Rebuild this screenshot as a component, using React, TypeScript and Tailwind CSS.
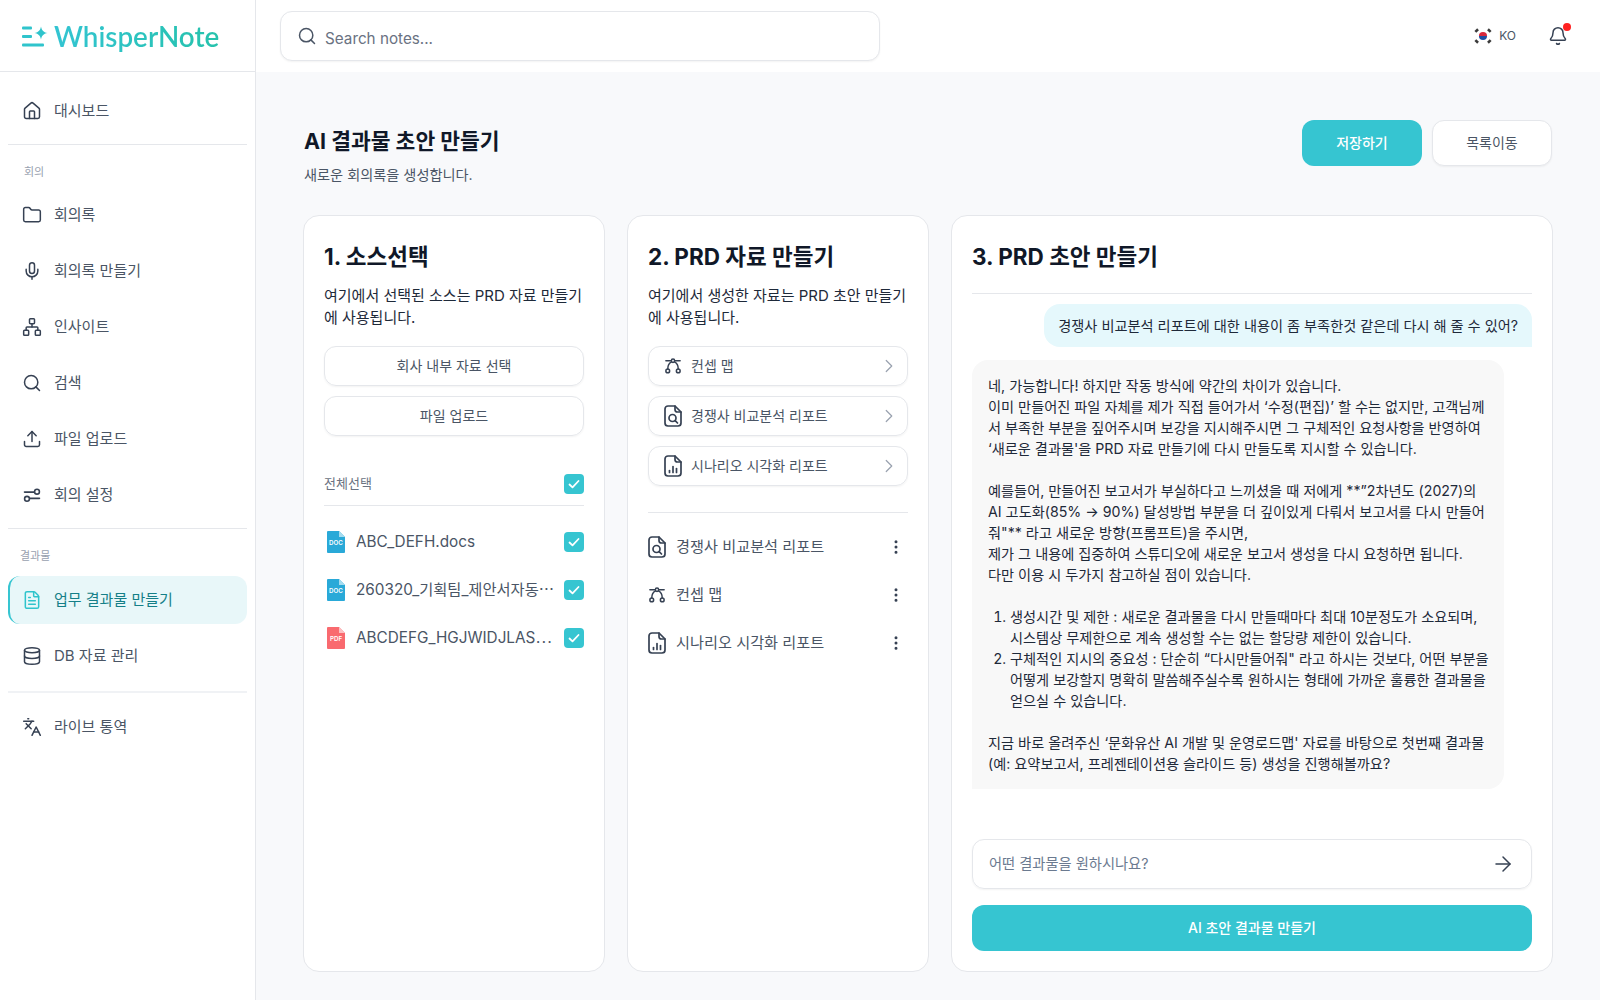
import { ArrowRight, Bell, ChevronRight, Database, EllipsisVertical, FileText, Folder, House, Languages, Mic, Network, Search, Upload } from 'lucide-react';

const FONT = 'font-[Inter,"Noto_Sans_CJK_KR",sans-serif]';

function MeetingSettingsIcon({ className }: { className?: string }) {
  return (
    <svg viewBox="0 0 24 24" fill="none" stroke="currentColor" strokeWidth="1.900" strokeLinecap="round" className={className}>
      <path d="M3 8.500h11.500" />
      <circle cx="18" cy="8" r="2.900" />
      <path d="M9.500 16H21" />
      <circle cx="6" cy="16.500" r="2.900" />
    </svg>
  );
}

function ConceptMapIcon() {
  return (
    <svg viewBox="0 0 24 24" fill="none" stroke="currentColor" strokeWidth="2" strokeLinecap="round" strokeLinejoin="round" className="h-[18px] w-[18px] shrink-0 text-[#364153]">
      <circle cx="12" cy="5" r="2.200" />
      <circle cx="5" cy="18.500" r="2.500" />
      <circle cx="19" cy="18.500" r="2.500" />
      <path d="M9.800 5H2.500" />
      <path d="M14.200 5h7.300" />
      <path d="M10 6.500c-3 1.500-5 4.500-5 9.500" />
      <path d="M14 6.500c3 1.500 5 4.500 5 9.500" />
    </svg>
  );
}

function DocSearchIcon() {
  return (
    <svg viewBox="3 1 18 22" fill="none" stroke="currentColor" strokeWidth="1.700" strokeLinecap="round" strokeLinejoin="round" className="h-[22px] w-[18px] shrink-0 text-[#364153]">
      <path d="M14 2H7a3 3 0 0 0-3 3v14a3 3 0 0 0 3 3h10a3 3 0 0 0 3-3V8z" />
      <path d="M14 2v3.500a2.500 2.500 0 0 0 2.500 2.500H20" />
      <circle cx="11.500" cy="14" r="3.500" />
      <path d="m14.200 16.700 2.300 2.300" />
    </svg>
  );
}

function DocChartIcon() {
  return (
    <svg viewBox="3 1 18 22" fill="none" stroke="currentColor" strokeWidth="1.700" strokeLinecap="round" strokeLinejoin="round" className="h-[22px] w-[18px] shrink-0 text-[#364153]">
      <path d="M14 2H7a3 3 0 0 0-3 3v14a3 3 0 0 0 3 3h10a3 3 0 0 0 3-3V8z" />
      <path d="M14 2v3.500a2.500 2.500 0 0 0 2.500 2.500H20" />
      <path d="M8.500 18.500v-2" />
      <path d="M12 18.500v-6" />
      <path d="M15.500 18.500v-4" />
    </svg>
  );
}

function FileBadge({ label, color, fold }: { label: string; color: string; fold: string }) {
  return (
    <svg viewBox="0 0 18 22" className="h-[22px] w-[18px] shrink-0">
      <path d="M1 0h11l6 6v15a1 1 0 0 1-1 1H1a1 1 0 0 1-1-1V1a1 1 0 0 1 1-1z" fill={color} />
      <path d="M12 0l6 6h-6z" fill={fold} />
      <text x="9" y="13.500" textAnchor="middle" fontSize="6.200" fontWeight="600" fill="#fff" fontFamily="Inter, sans-serif">{label}</text>
    </svg>
  );
}

function KoreaFlag() {
  return (
    <svg viewBox="0 0 20 20" className="h-[18px] w-[18px]">
      <circle cx="10" cy="10" r="10" fill="#fff" />
      <path d="M5.500 10a4.500 4.500 0 0 1 9 0z" fill="#d8283c" />
      <path d="M5.500 10a4.500 4.500 0 0 0 9 0z" fill="#1f4fa3" />
      <g stroke="#3a3a3a" strokeWidth="2.800" strokeLinecap="butt">
        <path d="M1.500 5.500l3-3" />
        <path d="M15.500 2.500l3 3" />
        <path d="M1.500 14.500l3 3" />
        <path d="M15.500 17.500l3-3" />
      </g>
    </svg>
  );
}

function Check() {
  return (
    <span className="flex h-5 w-5 shrink-0 items-center justify-center rounded-[4px] bg-[#36c5d1]">
      <svg viewBox="0 0 20 20" fill="none" stroke="#fff" strokeWidth="1.800" strokeLinecap="round" strokeLinejoin="round" className="h-5 w-5">
        <path d="M5.500 10.500l3 2.800 6-6.300" />
      </svg>
    </span>
  );
}

const meetingNav = [
  { label: '회의록', icon: Folder },
  { label: '회의록 만들기', icon: Mic },
  { label: '인사이트', icon: Network },
  { label: '검색', icon: Search },
  { label: '파일 업로드', icon: Upload },
  { label: '회의 설정', icon: MeetingSettingsIcon },
];

function NavItem({ label, icon: Icon }: { label: string; icon: React.ComponentType<{ className?: string; strokeWidth?: number }> }) {
  return (
    <div className="flex h-12 items-center gap-3 rounded-xl px-3.5 text-[15px] text-[#4a5565]">
      <Icon className="h-5 w-5 shrink-0 text-[#364153]" strokeWidth={1.8} />
      <span>{label}</span>
    </div>
  );
}

function Sidebar() {
  return (
    <aside className="flex h-full w-[256px] shrink-0 flex-col border-r border-[#e5e7eb] bg-white">
      <div className="flex h-[72px] shrink-0 items-center gap-1.5 border-b border-[#e5e7eb] pl-[22px]">
        <svg viewBox="0 0 26 22" className="h-[22px] w-[26px] shrink-0" fill="#2fc4cc">
          <rect x="0" y="1.500" width="10" height="3" rx="1" />
          <rect x="0" y="10" width="10" height="3" rx="1" />
          <rect x="0" y="18.500" width="22" height="3" rx="1" />
          <path d="M19 1.500c.7 3.700 2.300 5.700 6.500 6.500-4.200.8-5.800 2.800-6.500 6.500-.7-3.700-2.300-5.700-6.500-6.500 4.200-.8 5.800-2.800 6.500-6.500z" />
        </svg>
        <span className="mt-[3px] bg-linear-to-r from-[#33c4d2] to-[#26c2ac] bg-clip-text pt-[2px] pb-[2px] font-['Lato',sans-serif] text-[27.800px] leading-none font-semibold text-transparent">WhisperNote</span>
      </div>
      <nav className="flex flex-col px-2 pt-[15px]">
        <NavItem label="대시보드" icon={House} />
        <div className="mt-[9px] border-t border-[#e5e7eb]" />
        <p className="mt-[19px] pl-4 text-[11px] leading-4 text-[#99a1af]">회의</p>
        <div className="mt-[11px] flex flex-col gap-2">
          {meetingNav.map(item => <NavItem key={item.label} {...item} />)}
        </div>
        <div className="mt-[9px] border-t border-[#e5e7eb]" />
        <p className="mt-[19px] pl-3 text-[11px] leading-4 text-[#99a1af]">결과물</p>
        <div className="mt-[12px] flex h-12 items-center gap-3 rounded-xl border-l-2 border-[#36c5d1] bg-[#e8f7f9] px-3 text-[15px] text-[#157f88]">
          <FileText className="h-5 w-5 shrink-0 text-[#2fc4cc]" strokeWidth={1.8} />
          <span>업무 결과물 만들기</span>
        </div>
        <div className="mt-2">
          <NavItem label="DB 자료 관리" icon={Database} />
        </div>
        <div className="mt-[11px] border-t-2 border-[#f0f2f5]" />
        <div className="mt-2.5">
          <NavItem label="라이브 통역" icon={Languages} />
        </div>
      </nav>
    </aside>
  );
}

function TopBar() {
  return (
    <header className="flex h-[72px] shrink-0 items-center justify-between bg-white pr-8 pl-6">
      <div className="flex h-[50px] w-[600px] items-center gap-2 rounded-xl border border-[#e5e7eb] bg-white px-4 shadow-xs">
        <Search className="h-5 w-5 text-[#4a5565]" strokeWidth={1.8} />
        <span className="pt-1.5 text-[15.250px] text-[#6a7282]">Search notes...</span>
      </div>
      <div className="flex items-center gap-8">
        <div className="flex items-center gap-[7px]">
          <KoreaFlag />
          <span className="text-xs text-[#4a5565]">KO</span>
        </div>
        <div className="relative">
          <Bell className="h-5 w-5 text-[#364153]" strokeWidth={1.8} />
          <span className="absolute -top-[3px] -right-[3px] h-2 w-2 rounded-full bg-[#ff2020]" />
        </div>
      </div>
    </header>
  );
}

const sourceFiles = [
  { name: 'ABC_DEFH.docs', label: 'DOC', color: '#29a9d8', fold: '#a5dcf0' },
  { name: '260320_기획팀_제안서자동⋯', label: 'DOC', color: '#29a9d8', fold: '#a5dcf0' },
  { name: 'ABCDEFG_HGJWIDJLAS⋯', label: 'PDF', color: '#f96a6f', fold: '#fcc0c2' },
];

function SourcePanel() {
  return (
    <section className="flex min-w-0 flex-col rounded-2xl border border-[#e5e7eb] bg-white px-5 pt-[25px] pb-5">
      <h2 className="text-[22.500px] leading-8 font-bold text-[#101828]">1. 소스선택</h2>
      <p className="mt-3 text-[15px] leading-[22px] text-[#1e2939]">여기에서 선택된 소스는 PRD 자료 만들기에 사용됩니다.</p>
      <div className="mt-[17px] flex flex-col gap-2.5">
        <button className="h-10 rounded-xl border border-[#e5e7eb] text-sm text-[#4a5565] shadow-xs">회사 내부 자료 선택</button>
        <button className="h-10 rounded-xl border border-[#e5e7eb] text-sm text-[#4a5565] shadow-xs">파일 업로드</button>
      </div>
      <div className="mt-[38px] flex items-center justify-between border-b border-[#e5e7eb] pb-[11px]">
        <span className="text-[13px] text-[#6a7282]">전체선택</span>
        <Check />
      </div>
      <ul className="mt-3 flex flex-col">
        {sourceFiles.map(file => (
          <li key={file.name} className="flex h-12 items-center pl-[3px]">
            <FileBadge label={file.label} color={file.color} fold={file.fold} />
            <span className="ml-[11px] min-w-0 flex-1 text-[15.300px] whitespace-nowrap text-[#4a5565]">{file.name}</span>
            <span className="ml-3"><Check /></span>
          </li>
        ))}
      </ul>
    </section>
  );
}

const makeItems = [
  { label: '컨셉 맵', icon: ConceptMapIcon },
  { label: '경쟁사 비교분석 리포트', icon: DocSearchIcon },
  { label: '시나리오 시각화 리포트', icon: DocChartIcon },
];

const madeItems = [
  { label: '경쟁사 비교분석 리포트', icon: DocSearchIcon },
  { label: '컨셉 맵', icon: ConceptMapIcon },
  { label: '시나리오 시각화 리포트', icon: DocChartIcon },
];

function MaterialPanel() {
  return (
    <section className="flex min-w-0 flex-col rounded-2xl border border-[#e5e7eb] bg-white px-5 pt-[25px] pb-5">
      <h2 className="text-[22.500px] leading-8 font-bold text-[#101828]">2. PRD 자료 만들기</h2>
      <p className="mt-3 text-[15px] leading-[22px] text-[#1e2939]">여기에서 생성한 자료는 PRD 초안 만들기에 사용됩니다.</p>
      <div className="mt-[17px] flex flex-col gap-2.5">
        {makeItems.map(({ label, icon: Icon }) => (
          <div key={label} className="flex h-10 items-center rounded-xl border border-[#e5e7eb] pr-[7px] pl-[15px] text-sm text-[#4a5565] shadow-xs">
            <Icon />
            <span className="ml-[9px] flex-1">{label}</span>
            <ChevronRight className="h-[22px] w-[22px] text-[#99a1af]" strokeWidth={1.3} />
          </div>
        ))}
      </div>
      <div className="mt-[26px] border-t border-[#e5e7eb]" />
      <ul className="mt-[10px] flex flex-col">
        {madeItems.map(({ label, icon: Icon }) => (
          <li key={label} className="flex h-12 items-center pr-[3px] text-[15.200px] text-[#4a5565]">
            <Icon />
            <span className="ml-2.5 flex-1">{label}</span>
            <EllipsisVertical className="h-[18px] w-[18px] text-[#364153]" strokeWidth={2} />
          </li>
        ))}
      </ul>
    </section>
  );
}

function DraftPanel() {
  return (
    <section className="flex min-h-0 min-w-0 flex-col rounded-2xl border border-[#e5e7eb] bg-white px-5 pt-[25px] pb-5">
      <h2 className="border-b border-[#e5e7eb] pb-5 text-[22.500px] leading-8 font-bold text-[#101828]">3. PRD 초안 만들기</h2>
      <div className="mt-2.5 flex justify-end">
        <p className="rounded-t-2xl rounded-bl-2xl bg-[#e5f8fc] px-[14px] py-[11px] text-[14.200px] leading-[21px] text-[#1e2939]">경쟁사 비교분석 리포트에 대한 내용이 좀 부족한것 같은데 다시 해 줄 수 있어?</p>
      </div>
      <div className="mt-[13px] w-[532px] rounded-t-2xl rounded-br-2xl bg-[#f8f8f8] py-[15px] pr-3 pl-4 text-[14.200px] leading-[21px] text-[#1e2939]">
        <p>네, 가능합니다! 하지만 작동 방식에 약간의 차이가 있습니다.</p>
        <p>이미 만들어진 파일 자체를 제가 직접 들어가서 ‘수정(편집)’ 할 수는 없지만, 고객님께<br />서 부족한 부분을 짚어주시며 보강을 지시해주시면 그 구체적인 요청사항을 반영하여<br />‘새로운 결과물'을 PRD 자료 만들기에 다시 만들도록 지시할 수 있습니다.</p>
        <br />
        <p>예를들어, 만들어진 보고서가 부실하다고 느끼셨을 때 저에게 **”2차년도 (2027)의<br />AI 고도화(85% → 90%) 달성방법 부분을 더 깊이있게 다뤄서 보고서를 다시 만들어<br />줘"** 라고 새로운 방향(프롬프트)을 주시면,</p>
        <p>제가 그 내용에 집중하여 스튜디오에 새로운 보고서 생성을 다시 요청하면 됩니다.</p>
        <p>다만 이용 시 두가지 참고하실 점이 있습니다.</p>
        <br />
        <ol className="list-decimal pl-[22px]">
          <li>생성시간 및 제한 : 새로운 결과물을 다시 만들때마다 최대 10분정도가 소요되며,<br />시스템상 무제한으로 계속 생성할 수는 없는 할당량 제한이 있습니다.</li>
          <li>구체적인 지시의 중요성 : 단순히 “다시만들어줘" 라고 하시는 것보다, 어떤 부분을<br />어떻게 보강할지 명확히 말씀해주실수록 원하시는 형태에 가까운 훌륭한 결과물을<br />얻으실 수 있습니다.</li>
        </ol>
        <br />
        <p>지금 바로 올려주신 ‘문화유산 AI 개발 및 운영로드맵' 자료를 바탕으로 첫번째 결과물<br />(예: 요약보고서, 프레젠테이션용 슬라이드 등) 생성을 진행해볼까요?</p>
      </div>
      <div className="mt-auto flex h-[50px] items-center justify-between rounded-xl border border-[#e5e7eb] pr-4 pl-4 shadow-xs">
        <span className="text-[14.250px] text-[#6b7a90]">어떤 결과물을 원하시나요?</span>
        <ArrowRight className="h-6 w-6 text-[#364153]" strokeWidth={1.5} />
      </div>
      <button className="mt-4 h-[46px] shrink-0 rounded-xl bg-[#36c5d1] text-sm font-medium text-white">AI 초안 결과물 만들기</button>
    </section>
  );
}

export default function App() {
  return (
    <div className={`flex h-[1000px] w-[1600px] overflow-hidden bg-[#f8f9fb] ${FONT}`}>
      <Sidebar />
      <div className="flex min-w-0 flex-1 flex-col">
        <TopBar />
        <main className="flex min-h-0 flex-1 flex-col pt-[49px] pr-12 pb-7 pl-12">
          <div className="flex items-start justify-between">
            <div>
              <h1 className="text-[21.500px] leading-10 font-bold text-[#101828]">AI 결과물 초안 만들기</h1>
              <p className="mt-1 text-[14.200px] leading-5 text-[#4a5565]">새로운 회의록을 생성합니다.</p>
            </div>
            <div className="-mt-px flex gap-2.5">
              <button className="h-[46px] w-[120px] rounded-xl bg-[#36c5d1] text-sm font-medium text-white">저장하기</button>
              <button className="h-[46px] w-[120px] rounded-xl border border-[#e5e7eb] bg-white text-sm text-[#4a5565] shadow-xs">목록이동</button>
            </div>
          </div>
          <div className="mt-[30px] -ml-px grid min-h-0 flex-1 grid-cols-[302px_302px_602px] gap-[22px]">
            <SourcePanel />
            <MaterialPanel />
            <DraftPanel />
          </div>
        </main>
      </div>
    </div>
  );
}
